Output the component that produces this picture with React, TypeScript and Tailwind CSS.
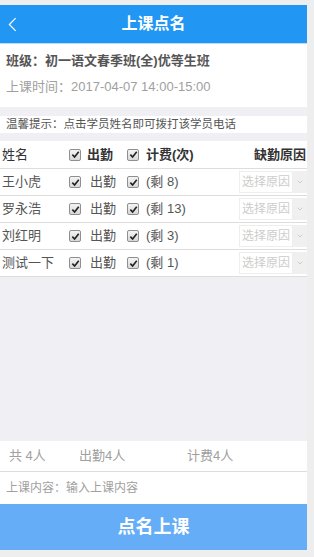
import { ChevronDown } from "lucide-react";

const students = [
  { name: "王小虎", left: 8 },
  { name: "罗永浩", left: 13 },
  { name: "刘红明", left: 3 },
  { name: "测试一下", left: 1 },
];

function Check() {
  return (
    <span className="inline-flex h-[12px] w-[12px] shrink-0 items-center justify-center rounded-[2px] border border-[#8f8f8f] bg-gradient-to-b from-[#f4f4f4] to-[#d8d8d8]">
      <svg viewBox="0 0 10 10" className="h-[9px] w-[9px]">
        <path d="M1.5 5.2 L4 7.8 L8.6 2" fill="none" stroke="#222" strokeWidth="1.8" />
      </svg>
    </span>
  );
}

function ReasonSelect() {
  return (
    <div className="flex h-[22px] items-stretch">
      <div className="flex w-[54px] items-center justify-center border border-[#eeeeee] text-[12px] text-[#cccccc]">
        选择原因
      </div>
      <div className="flex w-[14px] items-center justify-center bg-[#f0f0f0]">
        <ChevronDown className="h-[8px] w-[8px] text-[#bbbbbb]" strokeWidth={2} />
      </div>
    </div>
  );
}

export default function App() {
  return (
    <div
      className="flex min-h-[557px] bg-[#eeeeee] pt-[5px] pb-[7px] pr-[7px]"
      style={{ fontFamily: '"Liberation Sans", "Noto Sans CJK SC", sans-serif' }}
    >
      <div className="flex w-[307px] flex-col bg-[#efeff4]">
        <div className="relative flex h-[39px] items-center justify-center border-b border-[#bcdcfb] bg-[#2196f3]">
          <svg viewBox="0 0 10 16" className="absolute left-[8px] top-[12px] h-[15px] w-[9px]">
            <path d="M8.5 1 L1.5 8 L8.5 15" fill="none" stroke="#fff" strokeWidth="1.3" />
          </svg>
          <span className="text-[16px] font-bold text-white">上课点名</span>
        </div>

        <div className="flex h-[63px] flex-col bg-white px-[6px] pt-[8px]">
          <div className="text-[13px] font-bold leading-[18px] text-[#555555]">班级：初一语文春季班(全)优等生班</div>
          <div className="mt-[8px] text-[13px] leading-[18px] text-[#a0a0a0]">上课时间：2017-04-07 14:00-15:00</div>
        </div>

        <div className="mt-[9px] flex h-[17px] items-center bg-white px-[6px] text-[11.5px] text-[#555555]">
          温馨提示：点击学员姓名即可拨打该学员电话
        </div>

        <div className="mt-[8px] bg-white">
          <div className="flex h-[28px] items-center border-b border-[#dddddd] text-[13px] text-[#333333]">
            <span className="w-[69px] pl-[2px]">姓名</span>
            <Check />
            <span className="ml-[6px] w-[40px] font-semibold">出勤</span>
            <Check />
            <span className="ml-[7px] font-semibold">计费(次)</span>
            <span className="ml-auto pr-[1px] font-semibold">缺勤原因</span>
          </div>
          {students.map((s) => (
            <div key={s.name} className="flex h-[27px] items-center border-b border-[#dddddd] text-[13px] text-[#555555]">
              <span className="w-[69px] pl-[2px]">{s.name}</span>
              <Check />
              <span className="ml-[9px] w-[37px]">出勤</span>
              <Check />
              <span className="ml-[7px]">(剩 {s.left})</span>
              <div className="ml-auto">
                <ReasonSelect />
              </div>
            </div>
          ))}
        </div>

        <div className="flex-1" />

        <div className="flex h-[31px] items-center border-b border-[#dddddd] bg-white text-[13px] text-[#a0a0a0]">
          <span className="w-[79px] pl-[9px]">共 4人</span>
          <span className="w-[108px]">出勤4人</span>
          <span>计费4人</span>
        </div>
        <div className="flex h-[32px] items-center bg-white px-[6px] text-[12px] text-[#a0a0a0]">
          上课内容：输入上课内容
        </div>
        <button className="flex h-[46px] items-center justify-center bg-[#65adf6] text-[18px] font-bold text-white">
          点名上课
        </button>
      </div>
    </div>
  );
}
